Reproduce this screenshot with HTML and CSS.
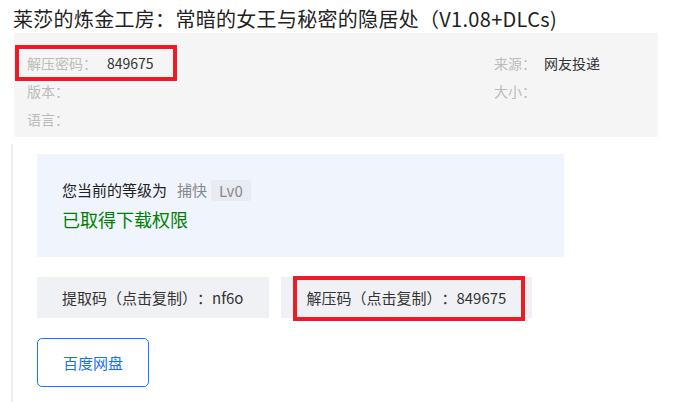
FILE: index.html
```html
<!DOCTYPE html>
<html lang="zh-CN">
<head>
<meta charset="utf-8">
<title>莱莎的炼金工房</title>
<link rel="stylesheet" href="styles.css">
</head>
<body>
<h1 class="title">莱莎的炼金工房：常暗的女王与秘密的隐居处（V1.08+DLCs)</h1>
<div class="meta">
  <div class="meta-item"><span class="label">解压密码：</span><span class="value">849675</span><span class="mark mark-a"></span></div>
  <div class="meta-item"><span class="label">来源：</span><span class="value">网友投递</span></div>
  <div class="meta-item"><span class="label">版本：</span></div>
  <div class="meta-item"><span class="label">大小：</span></div>
  <div class="meta-item"><span class="label">语言：</span></div>
</div>
<div class="section">
  <div class="level-box">
    <div class="level-line">您当前的等级为<span class="rank">捕快</span><span class="tag">Lv0</span></div>
    <div class="granted">已取得下载权限</div>
  </div>
  <div class="codes">
    <div class="code">提取码（点击复制）：nf6o</div>
    <div class="code">解压码（点击复制）：849675<span class="mark mark-b"></span></div>
  </div>
  <a class="btn">百度网盘</a>
</div>
</body>
</html>
```
FILE: styles.css
```css
* { box-sizing: border-box; }
html, body { margin: 0; padding: 0; background: #fff; }
body {
  font-family: "Noto Sans CJK SC", "Microsoft YaHei", sans-serif;
  color: #333;
  width: 673px;
  overflow: hidden;
  text-spacing-trim: space-all;
}
.title {
  margin: 0;
  padding: 5px 0 0 13px;
  font-size: 20px;
  line-height: 28px;
  font-weight: normal;
  letter-spacing: 0.3px;
  color: #222;
  white-space: nowrap;
}
.meta {
  margin-left: 14px;
  width: 644px;
  background: #f5f5f5;
  padding: 16px 13px 4px;
  display: grid;
  grid-template-columns: 467px 1fr;
}
.meta-item {
  position: relative;
  height: 28px;
  line-height: 28px;
  font-size: 14px;
}
.label { color: #bbb; }
.value { color: #333; margin-left: 8px; }
.meta-item:first-child .value { margin-left: 10px; }
.mark {
  position: absolute;
  border: 4px solid #ed1c24;
  pointer-events: none;
}
.mark-a { left: -12px; top: -4px; width: 162px; height: 36px; }
.section {
  margin: 7px 0 0 11px;
  border-left: 2px solid #f0f0f0;
  padding: 10px 0 20px 24px;
}
.level-box {
  width: 527px;
  height: 103px;
  background: #eff4fd;
  padding: 25px 25px 0;
}
.level-line {
  font-size: 15px;
  line-height: 22px;
  height: 22px;
  color: #222;
  display: flex;
  align-items: center;
}
.rank { color: #888; margin-left: 10px; }
.tag {
  margin-left: 4px;
  background: #e8ebf0;
  color: #888;
  border-radius: 3px;
  padding: 0 8px;
  height: 21px;
  line-height: 21px;
}
.granted {
  margin-top: 4px;
  color: #008000;
  font-size: 18px;
  line-height: 28px;
}
.codes {
  margin-top: 20px;
  display: flex;
  gap: 12px;
}
.code {
  position: relative;
  background: #f0f1f5;
  height: 41px;
  line-height: 41px;
  padding: 0 26px 0 25px;
  font-size: 15px;
  color: #333;
  white-space: nowrap;
}
.mark-b { left: 12px; top: -1px; width: 232px; height: 45px; }
.btn {
  display: flex;
  align-items: center;
  justify-content: center;
  margin-top: 20px;
  width: 112px;
  height: 49px;
  border: 1px solid #1677ff;
  border-radius: 5px;
  color: #1d6ff2;
  font-size: 15px;
}
```
